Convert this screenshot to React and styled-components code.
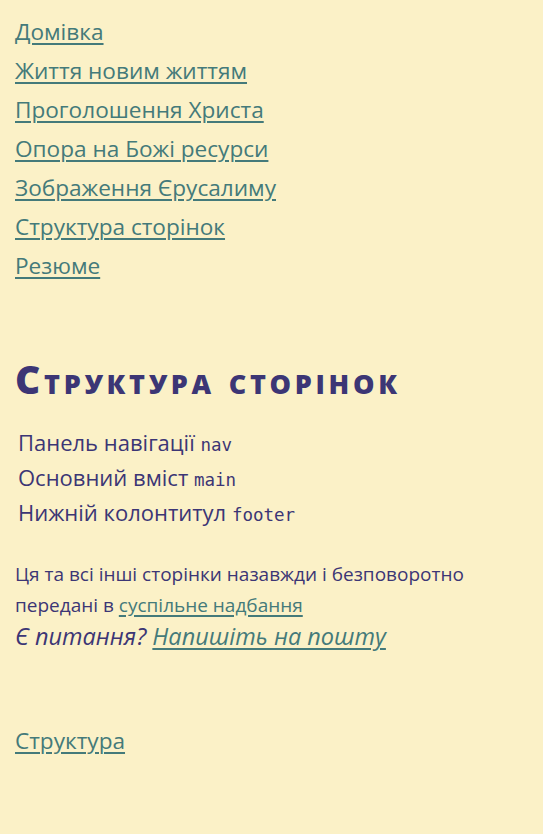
import React from "react";
import styled, { createGlobalStyle } from "styled-components";

const Global = createGlobalStyle`
  html, body { margin: 0; padding: 0; background: #fbf1c7; }
  body { font-family: "Open Sans", "Noto Sans", sans-serif; color: #3c3675; }
`;

const Page = styled.div`
  padding: 12px 15px 40px;
`;

const Nav = styled.nav`
  display: flex;
  flex-direction: column;
  align-items: flex-start;
`;

const Link = styled.a`
  color: #447a7a;
  text-decoration: underline;
  text-underline-offset: 3px;
  text-decoration-thickness: 1.5px;
  font-size: ${(p) => p.$size || 22.6}px;
`;

const NavLink = styled(Link)`
  line-height: 39px;
`;

const Main = styled.main`
  margin-top: 69px;
`;

const Title = styled.h1`
  margin: 0;
  font-size: 39px;
  font-weight: 800;
  font-variant: small-caps;
  letter-spacing: 3.7px;
  line-height: 50px;
  color: #3c3675;
`;

const List = styled.ul`
  list-style: none;
  margin: 21px 0 0;
  padding-left: 3px;
`;

const Item = styled.li`
  font-size: 22px;
  line-height: 35px;
`;

const Code = styled.code`
  font-family: "DejaVu Sans Mono", "Liberation Mono", monospace;
  font-size: 17.5px;
  line-height: 0;
`;

const Footer = styled.footer`
  margin-top: 29px;
`;

const Note = styled.p`
  margin: 0;
  font-size: 19px;
  line-height: 31px;
`;

const Ask = styled.p`
  margin: 0;
  font-style: italic;
  font-size: 23.5px;
  line-height: 31px;
`;

const Bottom = styled.div`
  margin-top: 69px;
`;

const navItems = [
  "Домівка",
  "Життя новим життям",
  "Проголошення Христа",
  "Опора на Божі ресурси",
  "Зображення Єрусалиму",
  "Структура сторінок",
  "Резюме",
];

export default function App() {
  return (
    <>
      <Global />
      <Page>
        <Nav>
          {navItems.map((t) => (
            <NavLink key={t} href="#">
              {t}
            </NavLink>
          ))}
        </Nav>
        <Main>
          <Title>Структура сторінок</Title>
          <List>
            <Item>
              Панель навігації <Code>nav</Code>
            </Item>
            <Item>
              Основний вміст <Code>main</Code>
            </Item>
            <Item>
              Нижній колонтитул <Code>footer</Code>
            </Item>
          </List>
        </Main>
        <Footer>
          <Note>
            Ця та всі інші сторінки назавжди і безповоротно передані в{" "}
            <Link href="#" $size={19}>
              суспільне надбання
            </Link>
          </Note>
          <Ask>
            Є питання?{" "}
            <Link href="#" $size={23.5}>
              Напишіть на пошту
            </Link>
          </Ask>
          <Bottom>
            <NavLink href="#">Структура</NavLink>
          </Bottom>
        </Footer>
      </Page>
    </>
  );
}
